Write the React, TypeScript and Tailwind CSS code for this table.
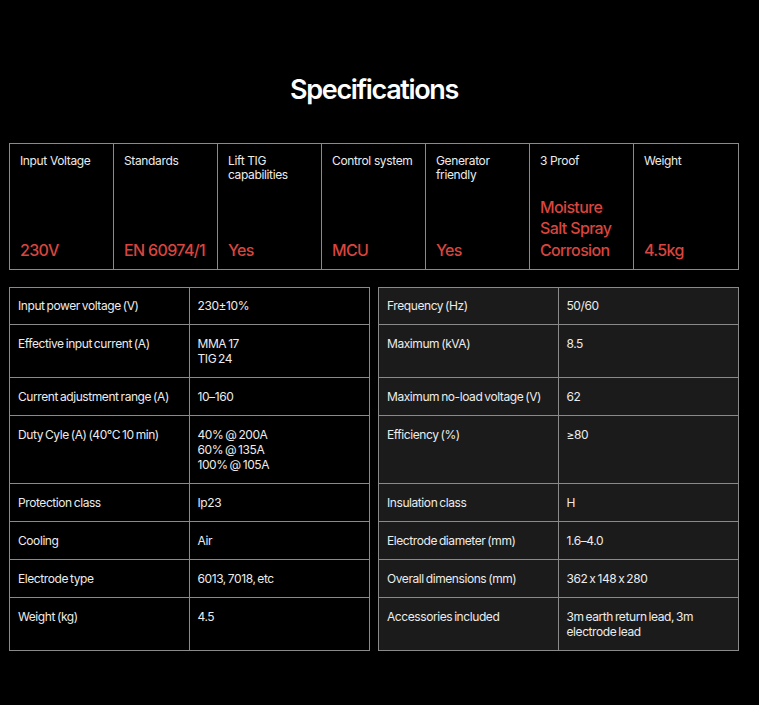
const highlights = [
  { label: 'Input Voltage', value: ['230V'] },
  { label: 'Standards', value: ['EN 60974/1'] },
  { label: 'Lift TIG capabilities', value: ['Yes'] },
  { label: 'Control system', value: ['MCU'] },
  { label: 'Generator friendly', value: ['Yes'] },
  { label: '3 Proof', value: ['Moisture', 'Salt Spray', 'Corrosion'] },
  { label: 'Weight', value: ['4.5kg'] },
]

type Spec = [string, string[]]

const rows: [Spec, Spec][] = [
  [
    ['Input power voltage (V)', ['230±10%']],
    ['Frequency (Hz)', ['50/60']],
  ],
  [
    ['Effective input current (A)', ['MMA 17', 'TIG 24']],
    ['Maximum (kVA)', ['8.5']],
  ],
  [
    ['Current adjustment range (A)', ['10–160']],
    ['Maximum no-load voltage (V)', ['62']],
  ],
  [
    ['Duty Cyle (A) (40°C 10 min)', ['40% @ 200A', '60% @ 135A', '100% @ 105A']],
    ['Efficiency (%)', ['≥80']],
  ],
  [
    ['Protection class', ['Ip23']],
    ['Insulation class', ['H']],
  ],
  [
    ['Cooling', ['Air']],
    ['Electrode diameter (mm)', ['1.6–4.0']],
  ],
  [
    ['Electrode type', ['6013, 7018, etc']],
    ['Overall dimensions (mm)', ['362 x 148 x 280']],
  ],
  [
    ['Weight (kg)', ['4.5']],
    ['Accessories included', ['3m earth return lead, 3m electrode lead']],
  ],
]

const font = { fontFamily: 'Inter, "Noto Sans", sans-serif' }

// one half of a spec row; the left and right halves share a flex row so heights line up
const SpecHalf = ({ spec, first, dark }: { spec: Spec; first: boolean; dark?: boolean }) => {
  const pad = first ? 'px-2 pt-[10px] pb-[11px]' : 'px-2 py-[11px]'
  return (
    <div
      className={`grid flex-1 grid-cols-2 border-x border-b border-[#8a8a8a] ${
        first ? 'border-t' : ''
      } ${dark ? 'bg-[#1b1b1b]' : 'bg-black'}`}
    >
      <div className={`border-r border-[#8a8a8a] ${pad}`}>{spec[0]}</div>
      <div className={pad}>
        {spec[1].map((line) => (
          <div key={line}>{line}</div>
        ))}
      </div>
    </div>
  )
}

export default function App() {
  return (
    <div
      className="min-h-screen bg-black pt-[68px] text-[#ececec] antialiased"
      style={font}
    >
      <div className="ml-[9px] w-[730px]">
        <h1 className="mb-[31px] text-center text-[27px] leading-[44px] font-semibold tracking-[-0.05em] text-white">
          Specifications
        </h1>

        <div className="grid h-[127px] grid-cols-7 divide-x divide-[#8a8a8a] border border-[#8a8a8a]">
          {highlights.map((h) => (
            <div
              key={h.label}
              className="flex flex-col justify-between px-[10px] pt-[10px] pb-2"
            >
              <div className="text-[12px] leading-[14px] tracking-[-0.03em]">{h.label}</div>
              <div className="text-[16px] leading-[21.5px] font-medium tracking-[-0.04em] text-[#d9453e]">
                {h.value.map((v) => (
                  <div key={v}>{v}</div>
                ))}
              </div>
            </div>
          ))}
        </div>

        <div className="mt-[17px] flex flex-col text-[12px] leading-[15px] tracking-[-0.035em] [word-spacing:-1px]">
          {rows.map(([left, right], i) => (
            <div key={left[0]} className="flex gap-2">
              <SpecHalf spec={left} first={i === 0} />
              <SpecHalf spec={right} first={i === 0} dark />
            </div>
          ))}
        </div>
      </div>
    </div>
  )
}
